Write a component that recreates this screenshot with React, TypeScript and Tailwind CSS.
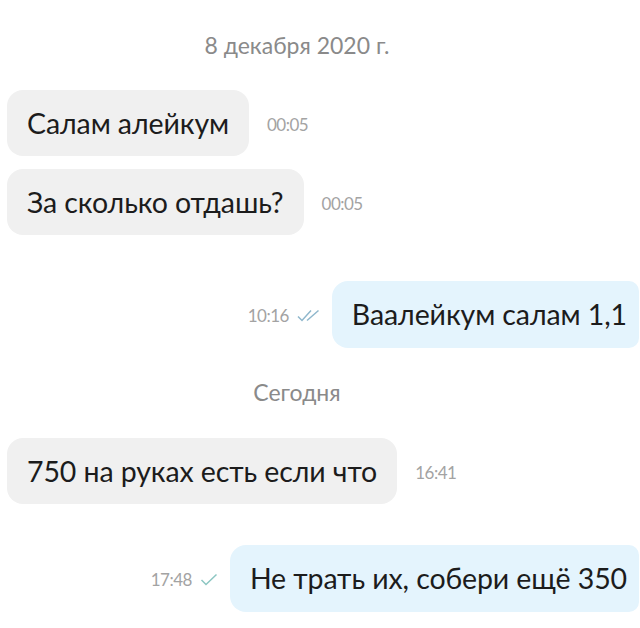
const font = { fontFamily: "Lato, 'Noto Sans', sans-serif" };

function Check({ double }: { double?: boolean }) {
  if (double) {
    return (
      <svg width="23" height="13" viewBox="0 0 23 13" className="shrink-0">
        <path d="M1 7.5 L5 11.5 L14 1.5" fill="none" stroke="#8fb7cc" strokeWidth="1.5" />
        <path d="M10 11.5 L21.5 1.5" fill="none" stroke="#8fb7cc" strokeWidth="1.5" />
      </svg>
    );
  }
  return (
    <svg width="18" height="13" viewBox="0 0 18 13" className="shrink-0">
      <path d="M1.5 7 L6 11.5 L16.5 1.5" fill="none" stroke="#8cc6c2" strokeWidth="1.5" />
    </svg>
  );
}

function Incoming({ text, time, className }: { text: string; time: string; className?: string }) {
  return (
    <div className={`flex items-center ${className ?? ""}`}>
      <div className="flex h-[66px] items-center rounded-[16px] bg-[#f0f0f0] px-[20px] text-[28.5px] tracking-[-0.1px] text-[#1c1c1c]">
        {text}
      </div>
      <span className="ml-[18px] mt-[4px] text-[17px] tracking-[-0.5px] text-[#a3a3a3]">{time}</span>
    </div>
  );
}

function Outgoing({
  text,
  time,
  double,
  className,
}: {
  text: string;
  time: string;
  double?: boolean;
  className?: string;
}) {
  return (
    <div className={`flex items-center justify-end ${className ?? ""}`}>
      <span className="mt-[2px] text-[17px] tracking-[-0.5px] text-[#a3a3a3]">{time}</span>
      <span className="ml-[8px] mr-[12px] mt-[2px]">
        <Check double={double} />
      </span>
      <div className="flex h-[67px] items-center rounded-l-[16px] rounded-r-[10px] bg-[#e4f4fd] pl-[20px] pr-[12px] text-[28.5px] tracking-[-0.1px] text-[#1c1c1c]">
        {text}
      </div>
    </div>
  );
}

export default function App() {
  return (
    <div className="h-[628px] w-[640px] overflow-hidden bg-white" style={font}>
      <div className="flex flex-col pl-[7px] pr-[1px] pt-[31px]">
        <div className="h-[28px] pr-[52px] text-center text-[23px] leading-[28px] text-[#8a8a8a]">
          8 декабря 2020 г.
        </div>

        <Incoming text="Салам алейкум" time="00:05" className="mt-[31px]" />
        <Incoming text="За сколько отдашь?" time="00:05" className="mt-[13px]" />

        <Outgoing text="Ваалейкум салам 1,1" time="10:16" double className="mt-[46px]" />

        <div className="mt-[30px] h-[28px] pr-[52px] text-center text-[23px] leading-[28px] text-[#8a8a8a]">
          Сегодня
        </div>

        <Incoming text="750 на руках есть если что" time="16:41" className="mt-[32px]" />

        <Outgoing text="Не трать их, собери ещё 350" time="17:48" className="mt-[41px]" />
      </div>
    </div>
  );
}
